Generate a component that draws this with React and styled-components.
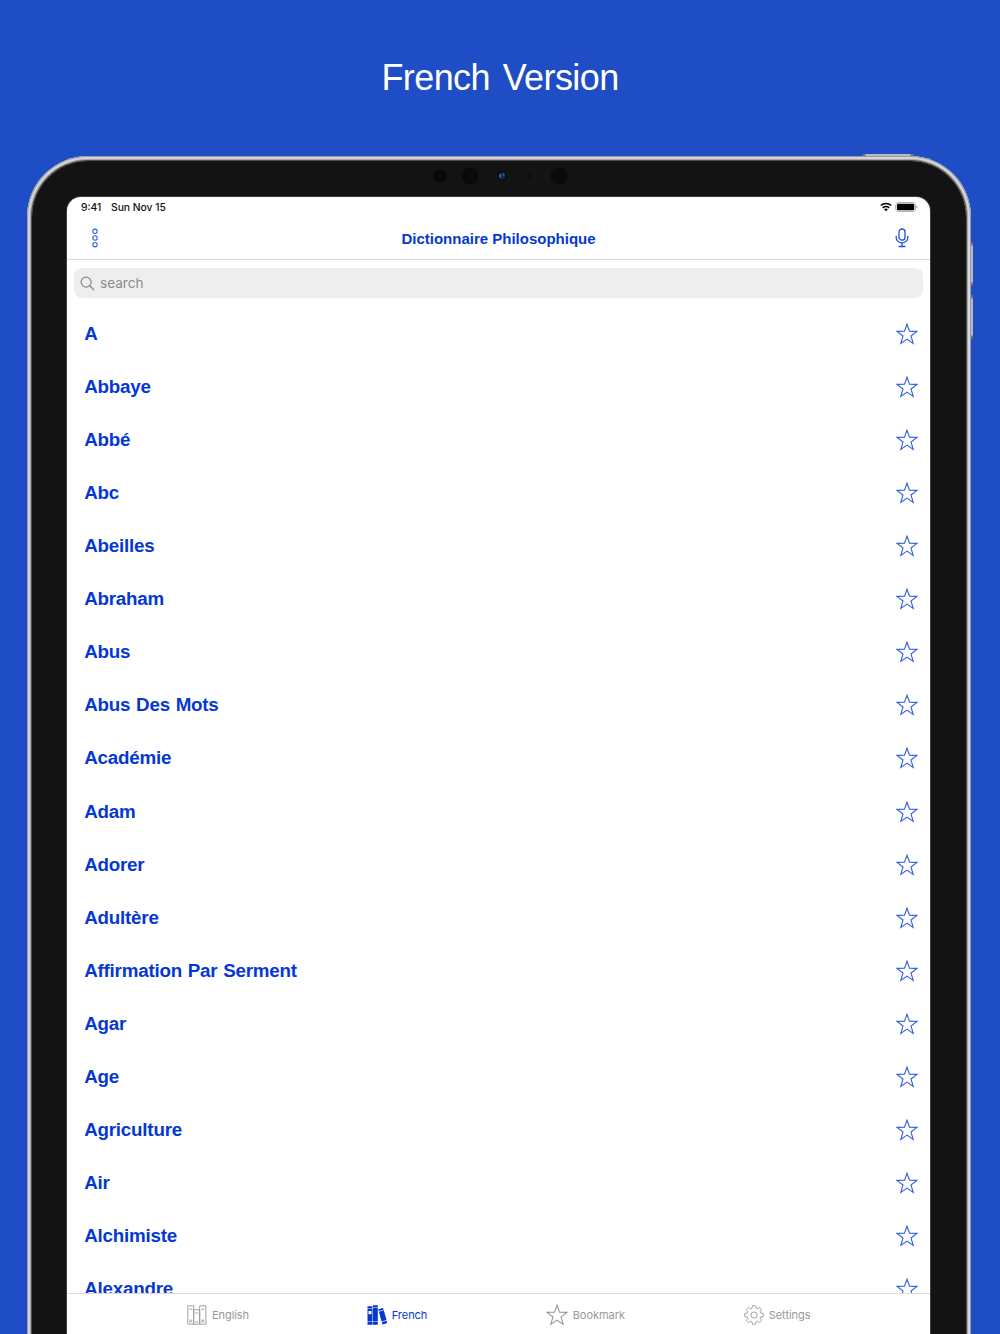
import React from 'react'
import styled, { createGlobalStyle, ThemeProvider } from 'styled-components'

const theme = {
  page: '#1f4dc5',
  accent: '#0538d2',
  icon: '#2f5fdc',
  grey: '#999',
  line: '#dcdcdc',
  bezel: '#131313',
  ui: 'Inter, "Liberation Sans", sans-serif',
  text: '"Liberation Sans", Arial, sans-serif'
}

const GlobalStyle = createGlobalStyle`
  * {
    box-sizing: border-box;
  }

  body {
    margin: 0;
    overflow: hidden;
    background: #1f4dc5;
  }
`
const Page = styled.main`
  display: flex;
  flex-direction: column;
  align-items: center;
  width: 1000px;
  height: 1334px;
  padding-right: 2px;
  overflow: hidden;
  background: ${props => props.theme.page};
`
const Caption = styled.h1`
  flex: none;
  height: 156px;
  margin: 0 -2px 0 0;
  padding-top: 57px;
  font: 400 36px/42px ${props => props.theme.text};
  letter-spacing: -.6px;
  word-spacing: 3.4px;
  color: #fff;
`
const Device = styled.div`
  position: relative;
  flex: none;
  width: 944px;
  height: 1400px;
  padding: 5px 5px 0;
  border-radius: 61px 61px 0 0;
  background: #d2d2d4;
  box-shadow: inset 0 0 0 1px #999da8, inset 0 0 0 3px #d6d6d8, inset 0 0 0 4px #a6a6a8, inset 0 0 0 5px #4c4c4e;
`
const HardwareKey = styled.span`
  position: absolute;
  top: ${props => props.$top}px;
  left: ${props => props.$left}px;
  width: ${props => props.$top < 0 ? 52 : 2}px;
  height: ${props => props.$top < 0 ? 2 : 44}px;
  background: linear-gradient(${props => props.$top < 0 ? 'to right' : 'to bottom'}, #666 0, #777 3px, #b9b9bc 4px, #b9b9bc calc(100% - 4px), #777 calc(100% - 3px), #666 100%);
`
const Bezel = styled.div`
  height: 100%;
  padding: 0 36px 0 35px;
  border-radius: 56px 56px 0 0;
  background: ${props => props.theme.bezel};
`
const Sensors = styled.svg`
  display: block;
  width: 160px;
  height: 36px;
  margin: 0 auto;
  transform: translateX(1px);
`
const Screen = styled.div`
  display: flex;
  flex-direction: column;
  width: 863px;
  height: 1137px;
  overflow: hidden;
  border-radius: 14px 14px 0 0;
  background: #fff;
  box-shadow: 0 0 0 1px #3c3d3d;
`
const StatusBar = styled.div`
  display: flex;
  align-items: center;
  flex: none;
  height: 20px;
  padding: 0 12px 0 14px;
  font: 500 10.3px/20px ${props => props.theme.ui};
  color: #111;
`
const StatusTime = styled.span`
  width: 30px;
`
const StatusDate = styled.span`
  margin-right: auto;
`
const NavBar = styled.header`
  display: grid;
  grid-template-columns: 56px 1fr 56px;
  align-items: center;
  justify-items: center;
  flex: none;
  height: 43px;
  border-bottom: 1px solid ${props => props.theme.line};
  color: ${props => props.theme.icon};
`
const NavTitle = styled.h2`
  margin: 1px 0 0;
  font: 700 15px/20px ${props => props.theme.text};
  color: ${props => props.theme.accent};
`
const Search = styled.label`
  display: flex;
  align-items: center;
  gap: 5px;
  flex: none;
  height: 30px;
  margin: 8px 7px 0;
  padding-left: 6px;
  border-radius: 8px;
  background: #eee;
  color: #87878a;
`
const SearchText = styled.span`
  font: 400 13.6px/20px ${props => props.theme.ui};
  color: #8c8c8f;
`
const List = styled.ul`
  flex: 1;
  min-height: 0;
  margin: 0;
  padding: 9.3px 12px 0 17.2px;
  overflow: hidden;
  list-style: none;
`
const Row = styled.li`
  display: flex;
  align-items: center;
  justify-content: space-between;
  height: 53.08px;
  font: 700 18.8px/24px ${props => props.theme.text};
  letter-spacing: -.22px;
  word-spacing: .8px;
  color: ${props => props.theme.accent};
`
const Star = styled.svg`
  flex: none;
  width: 22px;
  height: 22px;
  fill: none;
  stroke: ${props => props.$muted ? props.theme.grey : props.theme.icon};
  stroke-width: 1.1;
`
const TabBar = styled.nav`
  display: flex;
  flex: none;
  height: 41px;
  padding-left: 61.5px;
  border-top: 1px solid ${props => props.theme.line};
`
const Tab = styled.a`
  display: flex;
  align-items: center;
  justify-content: center;
  gap: 5px;
  flex: none;
  width: ${props => props.$width}px;
  padding-top: 2px;
  font: 400 11px/20px ${props => props.theme.ui};
  letter-spacing: -.05px;
  color: ${props => props.$active ? props.theme.accent : props.theme.grey};
`

const words = [
  'A', 'Abbaye', 'Abbé', 'Abc', 'Abeilles', 'Abraham', 'Abus', 'Abus Des Mots',
  'Académie', 'Adam', 'Adorer', 'Adultère', 'Affirmation Par Serment', 'Agar',
  'Age', 'Agriculture', 'Air', 'Alchimiste', 'Alexandre'
]

const StarIcon = ({ muted }) => (
  <Star $muted={muted} viewBox="0 0 22 22">
    <path d="M11 1.2 13.5 8.3 21 8.4 15 13 17.2 20.4 11 16.1 4.8 20.4 7 13 1 8.4 8.5 8.3Z" />
  </Star>
)

const ShelfIcon = () => (
  <svg width="20" height="20" viewBox="0 0 20 20" fill="none" stroke="currentColor" strokeWidth=".9">
    <path d="M.8.8h5.9v18.4H.8zM6.7 4.7h6v14.5h-6zM12.7.8h6.2v18.4h-6.2z" />
    <path d="M2.2 4.2h3M2.2 15.2h3M2.2 16.9h3M8.1 8h3.1M8.1 17h3.1M14.2 4.2h3M14.2 15.2h3M14.2 16.9h3" />
  </svg>
)

const BooksIcon = () => (
  <svg width="20" height="20" viewBox="0 0 20 20" fill="currentColor">
    <path d="M.5 1.2h5v2h-5zM.5 3.8h5v12.6h-5zM.5 17h5v2.7h-5zM6 .2h4.8v2H6zM6 2.8h4.8v13.6H6zM6 17h4.8v2.7H6z" />
    <path d="m11.2 4.2 4.9-1.3.5 1.8-4.9 1.4zM11.9 6.7l4.9-1.4 2.7 9.8-4.9 1.3zM14.8 17l4.8-1.3.6 2.6-4.8 1.2z" />
    <path d="M1.5 6h3v3.2h-3z" fill="#fff" />
  </svg>
)

const cogPath = () => {
  const points = []
  for (let i = 0; i < 8; i++) {
    [[-16, 7.1], [-9, 9.4], [9, 9.4], [16, 7.1]].forEach(([offset, radius]) => {
      const angle = (i * 45 + offset) * Math.PI / 180
      points.push(`${(10 + radius * Math.sin(angle)).toFixed(2)} ${(10 - radius * Math.cos(angle)).toFixed(2)}`)
    })
  }
  return `M${points.join('L')}Z`
}

const CogIcon = () => (
  <svg width="20" height="20" viewBox="0 0 20 20" fill="none" stroke="currentColor" strokeWidth=".9" strokeLinejoin="round">
    <path d={cogPath()} />
    <circle cx="10" cy="10" r="3.1" />
  </svg>
)

const tabs = [
  { label: 'English', icon: <ShelfIcon />, width: 179 },
  { label: 'French', icon: <BooksIcon />, width: 179, active: true },
  { label: 'Bookmark', icon: <StarIcon muted />, width: 197.6 },
  { label: 'Settings', icon: <CogIcon />, width: 186 }
]

const App = () => (
  <ThemeProvider theme={theme}>
    <GlobalStyle />
    <Page>
      <Caption>French Version</Caption>
      <Device>
        <HardwareKey $top={-2} $left={835} />
        <HardwareKey $top={86} $left={944} />
        <HardwareKey $top={139} $left={944} />
        <Bezel>
          <Sensors viewBox="0 0 160 36">
            <g fill="#0a0a0a">
              <circle cx="20" cy="15" r="6.8" />
              <circle cx="50" cy="15" r="8.3" />
              <circle cx="82" cy="15" r="5" />
              <circle cx="109" cy="15" r="1.7" />
              <circle cx="139" cy="15" r="8.3" />
            </g>
            <circle cx="82" cy="15" r="3.4" fill="#0c2a4e" />
            <path d="M79 13.5h2v3h-2zM82.5 12.5h2v2h-2z" fill="#31659c" />
          </Sensors>
          <Screen>
            <StatusBar>
              <StatusTime>9:41</StatusTime>
              <StatusDate>Sun Nov 15</StatusDate>
              <svg width="12" height="10" viewBox="0 0 12 10" fill="none" stroke="#000" strokeWidth="1.6">
                <path d="M.8 3.5a7.6 7.6 0 0 1 10.4 0M2.8 5.8a4.7 4.7 0 0 1 6.4 0" />
                <path d="m4.1 7.3a2.8 2.8 0 0 1 3.8 0L6 9.3z" fill="#000" stroke="none" />
              </svg>
              <svg width="23" height="10" viewBox="0 0 23 10" style={{ marginLeft: 3 }}>
                <rect x=".8" y=".6" width="19.6" height="8.8" rx="2.5" fill="#fff" stroke="#a8a8a8" />
                <rect x="2" y="1.8" width="17.2" height="6.4" rx="1.3" />
                <path d="M21.4 3.5q1.2.4 1.2 1.5t-1.2 1.5z" fill="#a8a8a8" />
              </svg>
            </StatusBar>
            <NavBar>
              <svg width="8" height="20" viewBox="0 0 8 20" fill="none" stroke="currentColor" strokeWidth="1.1">
                <circle cx="4" cy="3.3" r="2.2" />
                <circle cx="4" cy="10" r="2.2" />
                <circle cx="4" cy="16.7" r="2.2" />
              </svg>
              <NavTitle>Dictionnaire Philosophique</NavTitle>
              <svg width="14" height="20" viewBox="0 0 14 20" fill="none" stroke="#1f50d8" strokeWidth="1.3" strokeLinecap="round">
                <rect x="4" y="1" width="6" height="11.2" rx="3" />
                <path d="M1.2 8.5v1.2a5.8 5.2 0 0 0 11.6 0V8.5M7 15v3.3M4 18.5h6" />
              </svg>
            </NavBar>
            <Search>
              <svg width="15" height="15" viewBox="0 0 15 15" fill="none" stroke="currentColor" strokeWidth="1.2" strokeLinecap="round">
                <circle cx="6.1" cy="6.1" r="5" />
                <path d="m9.8 9.8 4 3.9" />
              </svg>
              <SearchText>search</SearchText>
            </Search>
            <List>
              {words.map(word => (
                <Row key={word}>
                  {word}
                  <StarIcon />
                </Row>
              ))}
            </List>
            <TabBar>
              {tabs.map(({ label, icon, width, active }) => (
                <Tab key={label} $width={width} $active={active}>
                  {icon}
                  {label}
                </Tab>
              ))}
            </TabBar>
          </Screen>
        </Bezel>
      </Device>
    </Page>
  </ThemeProvider>
)

export default App
